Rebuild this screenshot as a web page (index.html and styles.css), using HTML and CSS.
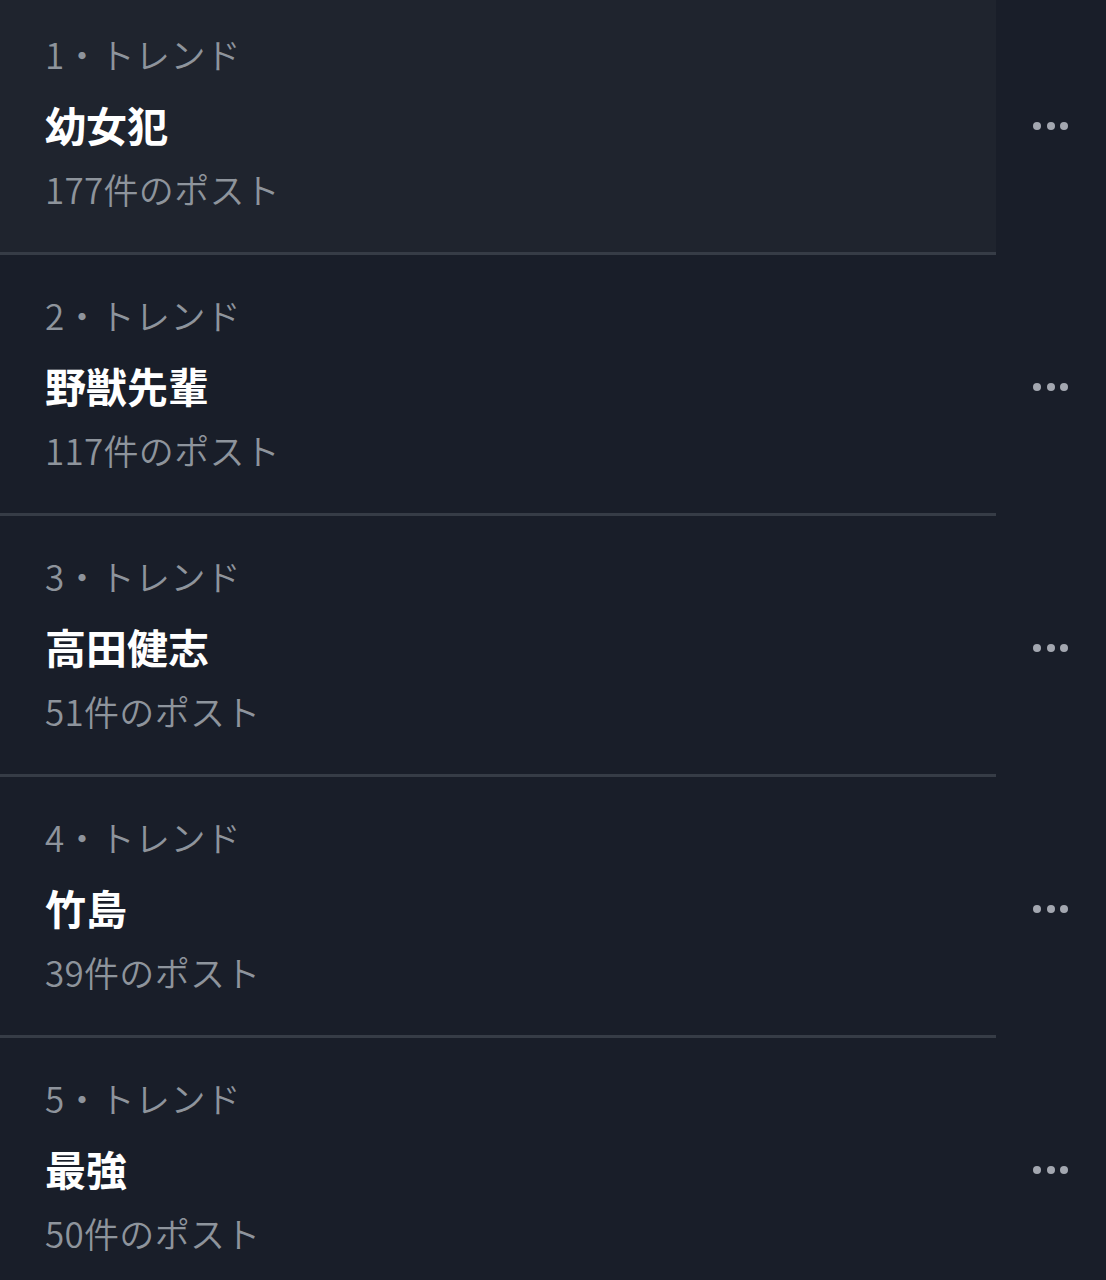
FILE: index.html
```html
<!DOCTYPE html>
<html lang="ja">
<head>
<meta charset="utf-8">
<link rel="stylesheet" href="styles.css">
</head>
<body>
<div class="list">
  <div class="row active">
    <div class="main">
      <div class="meta">1・トレンド</div>
      <div class="title">幼女犯</div>
      <div class="count">177件のポスト</div>
    </div>
    <div class="more"><span class="dot"></span><span class="dot"></span><span class="dot"></span></div>
  </div>
  <div class="row">
    <div class="main">
      <div class="meta">2・トレンド</div>
      <div class="title">野獣先輩</div>
      <div class="count">117件のポスト</div>
    </div>
    <div class="more"><span class="dot"></span><span class="dot"></span><span class="dot"></span></div>
  </div>
  <div class="row">
    <div class="main">
      <div class="meta">3・トレンド</div>
      <div class="title">高田健志</div>
      <div class="count">51件のポスト</div>
    </div>
    <div class="more"><span class="dot"></span><span class="dot"></span><span class="dot"></span></div>
  </div>
  <div class="row">
    <div class="main">
      <div class="meta">4・トレンド</div>
      <div class="title">竹島</div>
      <div class="count">39件のポスト</div>
    </div>
    <div class="more"><span class="dot"></span><span class="dot"></span><span class="dot"></span></div>
  </div>
  <div class="row">
    <div class="main">
      <div class="meta">5・トレンド</div>
      <div class="title">最強</div>
      <div class="count">50件のポスト</div>
    </div>
    <div class="more"><span class="dot"></span><span class="dot"></span><span class="dot"></span></div>
  </div>
</div>
</body>
</html>
```
FILE: styles.css
```css
html, body {
  margin: 0;
  padding: 0;
  background: #191e29;
}
body {
  width: 1106px;
  height: 1280px;
  overflow: hidden;
  font-family: "Noto Sans CJK JP", "Noto Sans", sans-serif;
}
.list {
  margin-top: -6px;
  display: flex;
  flex-direction: column;
}
.row {
  display: flex;
  height: 261px;
}
.main {
  width: 996px;
  box-sizing: border-box;
  padding: 36px 0 0 45px;
  border-bottom: 3px solid #363c46;
}
.row.active .main {
  background: #1f242e;
}
.meta {
  font-size: 35px;
  line-height: 48px;
  font-weight: 350;
  color: #8e949c;
  letter-spacing: 0.3px;
}
.title {
  margin-top: 22px;
  font-size: 41px;
  line-height: 48px;
  font-weight: 700;
  color: #ffffff;
}
.count {
  margin-top: 17px;
  font-size: 35px;
  line-height: 48px;
  font-weight: 350;
  color: #8e949c;
  letter-spacing: 0.3px;
}
.more {
  flex: 1;
  display: flex;
  align-items: flex-start;
  justify-content: flex-start;
  gap: 5.5px;
  padding: 128px 0 0 37px;
  box-sizing: border-box;
}
.dot {
  width: 8px;
  height: 8px;
  border-radius: 50%;
  background: #a3a7b0;
}
```
